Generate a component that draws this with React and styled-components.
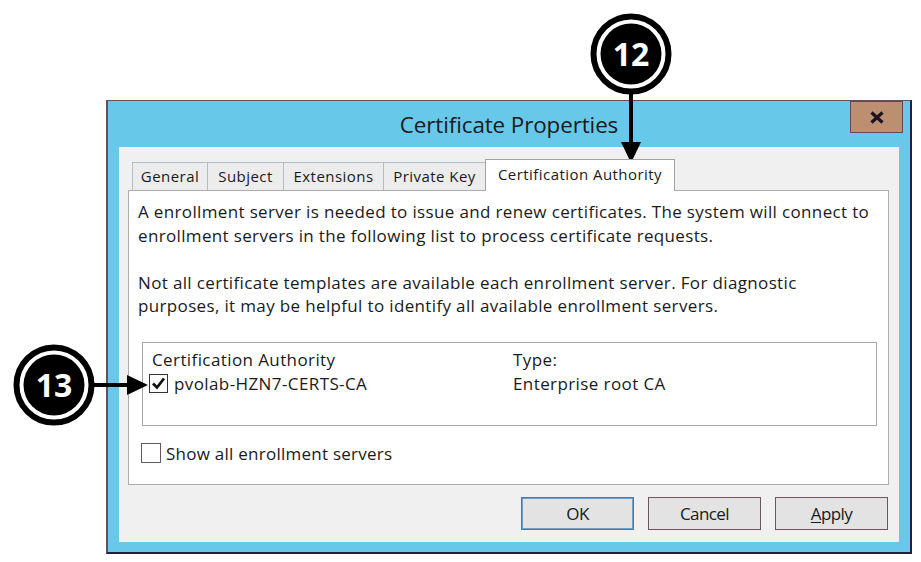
import React from 'react';
import styled, { createGlobalStyle } from 'styled-components';

const Global = createGlobalStyle`
  html, body { margin: 0; padding: 0; background: #ffffff; }
  body { font-family: "Open Sans", "Noto Sans", sans-serif; color: #1a1a1a; }
  * { box-sizing: border-box; }
`;

const Stage = styled.div`
  position: relative;
  width: 921px;
  height: 562px;
  overflow: hidden;
  background: #ffffff;
  padding: 100px 0 0 106px;
`;

const Window = styled.div`
  width: 806px;
  height: 454px;
  display: flex;
  flex-direction: column;
  background: #67c8ea;
  border-left: 2px solid #6d4b57;
  border-top: 1px solid #6d4b57;
  border-right: 2px solid #23223a;
  border-bottom: 2px solid #23223a;
  padding: 0 11px 10px 11px;
`;

const TitleBar = styled.div`
  height: 46px;
  flex: none;
  display: grid;
  grid-template-columns: 1fr auto 1fr;
  align-items: center;
`;

const Title = styled.div`
  grid-column: 2;
  font-size: 22.4px;
  color: #1b1b1b;
  letter-spacing: -0.1px;
`;

const CloseButton = styled.div`
  grid-column: 3;
  justify-self: end;
  align-self: start;
  width: 53px;
  height: 32px;
  margin-right: -4px;
  background: #bb8f70;
  border: 1px solid #6d4550;
  display: flex;
  align-items: center;
  justify-content: center;
`;

const Client = styled.div`
  flex: 1;
  display: flex;
  flex-direction: column;
  background: #f0f0f0;
  padding: 13px 10px 0 9px;
`;

const TabStrip = styled.div`
  height: 31px;
  display: flex;
  align-items: flex-end;
  padding-left: 4px;
  position: relative;
  z-index: 1;
  margin-bottom: -1px;
`;

const Tab = styled.div`
  width: ${p => p.$w}px;
  height: ${p => (p.$active ? 32 : 29)}px;
  display: flex;
  align-items: center;
  justify-content: center;
  font-size: 15px;
  letter-spacing: 0.45px;
  padding-bottom: ${p => (p.$active ? 4 : 1)}px;
  color: #1a1a1a;
  background: ${p => (p.$active ? '#ffffff' : '#ececec')};
  border: 1px solid ${p => (p.$active ? '#a3a3a3' : '#b4bcc6')};
  border-bottom: ${p => (p.$active ? 'none' : '1px solid #adadad')};
  margin-left: ${p => (p.$first ? 0 : -1)}px;
  white-space: nowrap;
`;

const Panel = styled.div`
  height: 295px;
  flex: none;
  background: #ffffff;
  border: 1px solid #adadad;
  padding: 9px 11px 0 9px;
  display: flex;
  flex-direction: column;
`;

const Para = styled.p`
  margin: ${p => (p.$spaced ? 23.5 : 0)}px 0 0 0;
  font-size: 17px;
  line-height: 23.5px;
  letter-spacing: 0.35px;
  color: #1a1a1a;
`;

const ListBox = styled.div`
  margin: 24px 0 0 4px;
  height: 84px;
  border: 1px solid #a8a8a8;
  padding: 5px 0 0 9px;
  display: grid;
  grid-template-columns: 361px 1fr;
  grid-auto-rows: 24px;
  align-items: center;
  font-size: 17px;
  letter-spacing: 0.4px;
`;

const Cell = styled.div`
  display: flex;
  align-items: center;
  gap: 6px;
  white-space: nowrap;
`;

const Box = styled.div`
  width: ${p => p.$size}px;
  height: ${p => p.$size}px;
  margin-left: ${p => p.$shift}px;
  flex: none;
  background: #ffffff;
  border: 1px solid ${p => p.$tone};
  display: flex;
  align-items: center;
  justify-content: center;
`;

const CheckRow = styled.label`
  margin: 16px 0 0 3px;
  display: flex;
  align-items: center;
  gap: 5px;
  font-size: 17px;
  letter-spacing: 0.25px;
`;

const ButtonRow = styled.div`
  display: flex;
  justify-content: flex-end;
  gap: 14px;
  margin: 12px 1px 0 0;
`;

const Button = styled.div`
  width: 113px;
  height: 33px;
  display: flex;
  align-items: center;
  justify-content: center;
  font-size: 17px;
  letter-spacing: -0.6px;
  background: #e3e3e3;
  border: 1px solid ${p => (p.$default ? '#3c7db5' : '#6e5560')};
  box-shadow: ${p => (p.$default ? 'inset 0 0 0 1px #6f9fc9' : 'none')};
  color: #1a1a1a;
  u { text-decoration: underline; text-underline-offset: 2px; }
`;

const Overlay = styled.svg`
  position: absolute;
  left: 0;
  top: 0;
  pointer-events: none;
`;

const Callout = ({ cx, cy, label }) => (
  <g>
    <circle cx={cx} cy={cy} r={37.5} fill="none" stroke="#000" strokeWidth={6} />
    <circle cx={cx} cy={cy} r={30.5} fill="#000" />
    <text
      x={cx}
      y={cy + 11.5}
      textAnchor="middle"
      fill="#fff"
      fontFamily='"Open Sans", "Noto Sans", sans-serif'
      fontWeight="700"
      fontSize="32"
    >
      {label}
    </text>
  </g>
);

const Check = () => (
  <svg width="15" height="15" viewBox="0 0 15 15">
    <path d="M2 7.5 L6 11.5 L13 2.5" fill="none" stroke="#111" strokeWidth="2.8" strokeLinejoin="miter" />
  </svg>
);

export default function App() {
  return (
    <>
      <Global />
      <Stage>
        <Window>
          <TitleBar>
            <Title>Certificate Properties</Title>
            <CloseButton>
              <svg width="14" height="13" viewBox="0 0 14 13">
                <path d="M1.5 1.5 L12.5 11.5 M12.5 1.5 L1.5 11.5" stroke="#1a1420" strokeWidth="3.2" />
              </svg>
            </CloseButton>
          </TitleBar>
          <Client>
            <TabStrip>
              <Tab $w={76} $first>General</Tab>
              <Tab $w={77}>Subject</Tab>
              <Tab $w={101}>Extensions</Tab>
              <Tab $w={103}>Private Key</Tab>
              <Tab $w={190} $active>Certification Authority</Tab>
            </TabStrip>
            <Panel>
              <Para>
                A enrollment server is needed to issue and renew certificates. The system will connect to
                enrollment servers in the following list to process certificate requests.
              </Para>
              <Para $spaced>
                Not all certificate templates are available each enrollment server. For diagnostic
                purposes, it may be helpful to identify all available enrollment servers.
              </Para>
              <ListBox>
                <Cell>Certification Authority</Cell>
                <Cell>Type:</Cell>
                <Cell>
                  <Box $size={19} $shift={-3} $tone="#333333"><Check /></Box>
                  pvolab-HZN7-CERTS-CA
                </Cell>
                <Cell>Enterprise root CA</Cell>
              </ListBox>
              <CheckRow>
                <Box $size={20} $shift={0} $tone="#6a5562" />
                Show all enrollment servers
              </CheckRow>
            </Panel>
            <ButtonRow>
              <Button $default>OK</Button>
              <Button>Cancel</Button>
              <Button><span><u>A</u>pply</span></Button>
            </ButtonRow>
          </Client>
        </Window>
        <Overlay width="921" height="562" viewBox="0 0 921 562">
          <Callout cx={631} cy={54} label="12" />
          <line x1={631} y1={94} x2={631} y2={145} stroke="#000" strokeWidth={4} />
          <polygon points="621,142 641,142 631,163" fill="#000" />
          <Callout cx={54} cy={385} label="13" />
          <line x1={94} y1={385} x2={130} y2={385} stroke="#000" strokeWidth={4} />
          <polygon points="127,375 127,395 148,385" fill="#000" />
        </Overlay>
      </Stage>
    </>
  );
}
